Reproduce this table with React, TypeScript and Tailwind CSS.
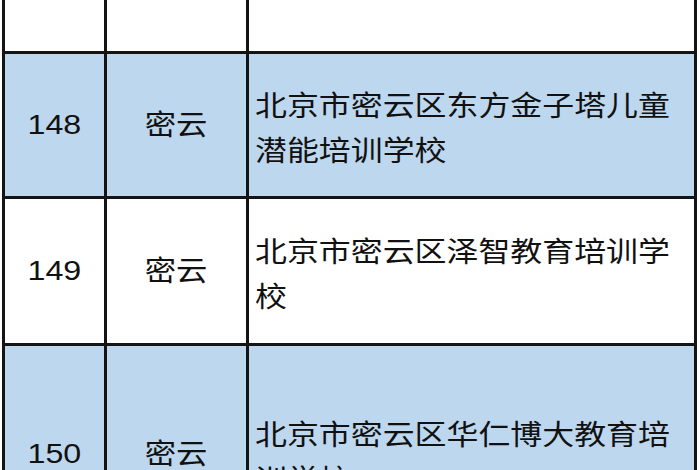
import React from "react";

const font = { fontFamily: '"Liberation Sans", "Noto Sans CJK SC", sans-serif' };

type Row = { no?: string; area?: string; lines: string[]; bg: string; h: string };

const rows: Row[] = [
  { lines: [], bg: "bg-white", h: "h-[54px]" },
  { no: "148", area: "密云", lines: ["北京市密云区东方金子塔儿童", "潜能培训学校"], bg: "bg-[#bdd7ee]", h: "h-[145px]" },
  { no: "149", area: "密云", lines: ["北京市密云区泽智教育培训学", "校"], bg: "bg-white", h: "h-[147px]" },
  { no: "150", area: "密云", lines: ["北京市密云区华仁博大教育培", "训学校"], bg: "bg-[#bdd7ee]", h: "h-[216px]" },
];

export default function App() {
  return (
    <div className="w-[700px] h-[470px] overflow-hidden bg-white text-[#111111]" style={font}>
      <div className="ml-[2px] w-[695px] border-x-[3px] border-[#141414] flex flex-col">
        {rows.map((r, i) => (
          <div
            key={i}
            className={`flex ${r.h} ${r.bg} ${i < rows.length - 1 ? "border-b-[3px] border-[#141414]" : ""}`}
          >
            <div className="w-[102px] shrink-0 flex items-center justify-center border-r-[3px] border-[#141414]">
              <span className="text-[28px] scale-x-[1.15]">{r.no}</span>
            </div>
            <div className="w-[142px] shrink-0 flex items-center justify-center border-r-[3px] border-[#141414]">
              <span className="text-[28px] scale-x-[1.12] pt-[2px]">{r.area}</span>
            </div>
            <div className="flex-1 flex flex-col justify-center pl-[6px] pt-[8px]">
              {r.lines.map((l, j) => (
                <div key={j} className="text-[28px] leading-[45px] whitespace-nowrap origin-left scale-x-[1.14]">
                  {l}
                </div>
              ))}
            </div>
          </div>
        ))}
      </div>
    </div>
  );
}
